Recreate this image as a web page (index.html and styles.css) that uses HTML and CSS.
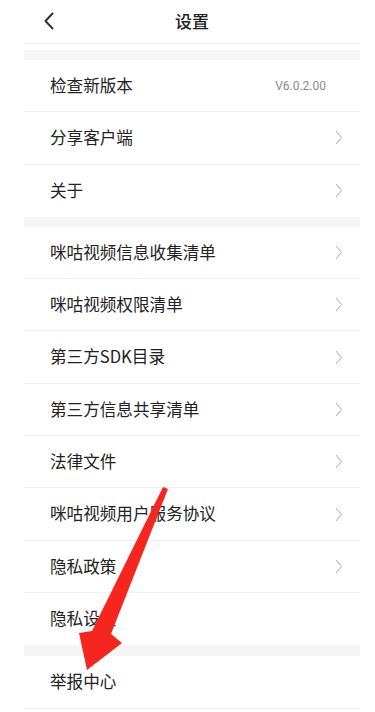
FILE: index.html
```html
<!DOCTYPE html>
<html lang="zh-CN">
<head>
<meta charset="utf-8">
<meta name="viewport" content="width=375">
<title>设置</title>
<link rel="stylesheet" href="styles.css">
</head>
<body>
<div class="page">
  <header class="header">
    <svg class="back" width="12" height="18" viewBox="0 0 12 18"><path d="M9.5 1.5 L2.5 9 L9.5 16.5" fill="none" stroke="#333" stroke-width="2" stroke-linecap="round" stroke-linejoin="round"/></svg>
    <h1 class="title">设置</h1>
  </header>
  <div class="band first"></div>
  <ul class="list">
    <li class="row"><span class="label">检查新版本</span><span class="version">V6.0.2.00</span></li>
    <li class="row"><span class="label">分享客户端</span><svg class="chev" width="8" height="15" viewBox="0 0 8 15"><path d="M1 1 L6.5 7.5 L1 14" fill="none" stroke="#aaa" stroke-width="1"/></svg></li>
    <li class="row last"><span class="label">关于</span><svg class="chev" width="8" height="15" viewBox="0 0 8 15"><path d="M1 1 L6.5 7.5 L1 14" fill="none" stroke="#aaa" stroke-width="1"/></svg></li>
  </ul>
  <div class="band"></div>
  <ul class="list">
    <li class="row"><span class="label">咪咕视频信息收集清单</span><svg class="chev" width="8" height="15" viewBox="0 0 8 15"><path d="M1 1 L6.5 7.5 L1 14" fill="none" stroke="#aaa" stroke-width="1"/></svg></li>
    <li class="row"><span class="label">咪咕视频权限清单</span><svg class="chev" width="8" height="15" viewBox="0 0 8 15"><path d="M1 1 L6.5 7.5 L1 14" fill="none" stroke="#aaa" stroke-width="1"/></svg></li>
    <li class="row"><span class="label">第三方SDK目录</span><svg class="chev" width="8" height="15" viewBox="0 0 8 15"><path d="M1 1 L6.5 7.5 L1 14" fill="none" stroke="#aaa" stroke-width="1"/></svg></li>
    <li class="row"><span class="label">第三方信息共享清单</span><svg class="chev" width="8" height="15" viewBox="0 0 8 15"><path d="M1 1 L6.5 7.5 L1 14" fill="none" stroke="#aaa" stroke-width="1"/></svg></li>
    <li class="row"><span class="label">法律文件</span><svg class="chev" width="8" height="15" viewBox="0 0 8 15"><path d="M1 1 L6.5 7.5 L1 14" fill="none" stroke="#aaa" stroke-width="1"/></svg></li>
    <li class="row"><span class="label">咪咕视频用户服务协议</span><svg class="chev" width="8" height="15" viewBox="0 0 8 15"><path d="M1 1 L6.5 7.5 L1 14" fill="none" stroke="#aaa" stroke-width="1"/></svg></li>
    <li class="row"><span class="label">隐私政策</span><svg class="chev" width="8" height="15" viewBox="0 0 8 15"><path d="M1 1 L6.5 7.5 L1 14" fill="none" stroke="#aaa" stroke-width="1"/></svg></li>
    <li class="row last"><span class="label">隐私设置</span></li>
  </ul>
  <div class="band tail"></div>
  <ul class="list">
    <li class="row"><span class="label">举报中心</span></li>
  </ul>
</div>
<svg class="arrow" width="375" height="712" viewBox="0 0 375 712">
  <polygon points="163,487 168,489 111,634 122,643 87,670 79,633 92,631" fill="#f5261e"/>
</svg>
</body>
</html>
```
FILE: styles.css
```css
* { box-sizing: border-box; }
html, body { margin: 0; padding: 0; background: #fff; }
body {
  width: 375px;
  height: 712px;
  overflow: hidden;
  position: relative;
  font-family: "Noto Sans CJK SC", "Noto Sans", sans-serif;
  color: #222;
}
.page {
  margin: 0 24px;
  width: 336px;
}
.header {
  height: 44px;
  border-bottom: 1px solid #f0f0f0;
  display: flex;
  align-items: center;
  justify-content: center;
  position: relative;
}
.back {
  position: absolute;
  left: 19px;
  top: 12px;
}
.title {
  margin: -3px 0 0;
  font-size: 17px;
  font-weight: 500;
  color: #222;
  line-height: 1;
}
.band {
  height: 10px;
  background: #f5f5f5;
}
.band.first { margin-top: 6px; }
.band.tail { height: 11px; }
.list {
  list-style: none;
  margin: 0;
  padding: 0;
}
.row {
  height: 52.3px;
  display: flex;
  align-items: center;
  justify-content: space-between;
  padding: 0 17px 0 26px;
  border-bottom: 1px solid #f0f0f0;
}
.row.last { border-bottom: none; }
.label {
  font-size: 16.6px;
  color: #222;
  line-height: 1;
  margin-top: -1px;
}
.version {
  font-family: Roboto, "Liberation Sans", sans-serif;
  font-size: 12px;
  color: #8a8a8a;
  margin-right: 17px;
}
.chev { display: block; }
.arrow {
  position: absolute;
  left: 0;
  top: 0;
  pointer-events: none;
}
```
